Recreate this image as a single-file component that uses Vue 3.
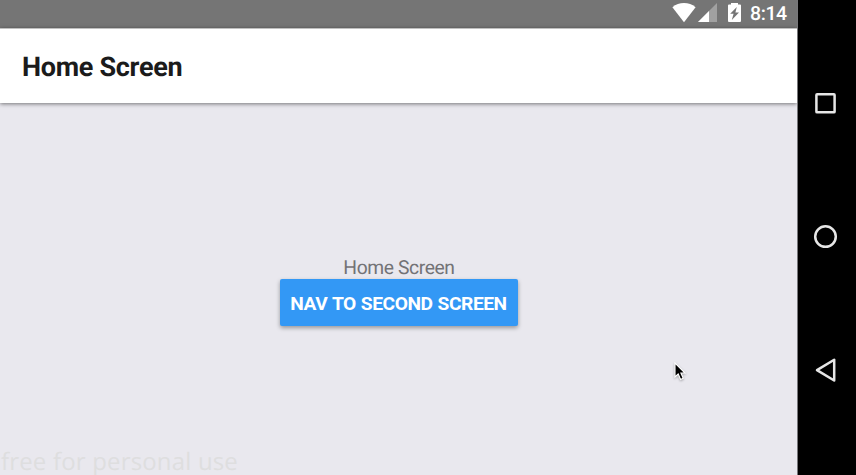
<script setup>
const title = 'Home Screen'
</script>

<template>
  <div class="device">
    <div class="screen">
      <div class="status">
        <svg class="wifi" width="24" height="20" viewBox="0 0 24 20"><path d="M.4 4.2C7-1.4 17-1.4 23.6 4.2L12 19.2Z" fill="#fff" /></svg>
        <svg class="signal" width="19" height="19" viewBox="0 0 19 19"><path d="M0 19 19 0V19Z" fill="#a1a1a1" /><path d="M0 19 11 8V19Z" fill="#fff" /></svg>
        <svg class="battery" width="13" height="19" viewBox="0 0 13 19"><path d="M3 0H10V1.5H12Q13 1.5 13 2.5V18Q13 19 12 19H1Q0 19 0 18V2.5Q0 1.5 1 1.5H3Z" fill="#fff" /><path d="M8.8 4 2.2 10.8H5.6L3.8 17 11 9.4H7.4Z" fill="#757575" /></svg>
        <span class="time">8:14</span>
      </div>
      <header class="header"><h1>{{ title }}</h1></header>
      <main class="content">
        <p class="label">{{ title }}</p>
        <button class="button">NAV TO SECOND SCREEN</button>
      </main>
      <div class="watermark">free for personal use</div>
      <svg class="cursor" width="13" height="20" viewBox="0 0 13 20"><path d="M1 1V15L4.2 12 6.6 17.4 9.2 16.2 6.9 11H11Z" fill="#000" stroke="#fff" stroke-width="1.1" /></svg>
    </div>
    <nav class="nav">
      <svg width="28" height="28" viewBox="0 0 28 28"><rect x="4.4" y="4.2" width="18.2" height="18" rx=".7" /></svg>
      <svg width="28" height="28" viewBox="0 0 28 28"><circle cx="13.5" cy="13.4" r="10.3" /></svg>
      <svg width="28" height="28" viewBox="0 0 28 28"><path d="M5 13 22.2 2.6V23.4Z" /></svg>
    </nav>
  </div>
</template>

<style>
body { margin: 0; overflow: hidden; }
</style>

<style scoped>
.device {
  display: flex;
  width: 856px;
  height: 475px;
  background: #000;
  font-family: Roboto, "Liberation Sans", sans-serif;
  text-rendering: geometricPrecision;
}
.screen {
  position: relative;
  display: flex;
  flex: none;
  flex-direction: column;
  box-sizing: border-box;
  width: 798px;
  overflow: hidden;
  border-right: 1px solid #77777a;
  background: #e9e8ee;
}
.status {
  display: flex;
  flex: none;
  box-sizing: border-box;
  justify-content: flex-end;
  height: 28px;
  padding: 3px 10px 0 0;
  background: #757575;
}
.wifi { margin: 0 2px 0 0; }
.signal { margin-right: 11px; }
.battery { margin-right: 9px; }
.time {
  width: 37px;
  color: #fff;
  font-size: 19.5px;
  font-weight: 500;
  letter-spacing: -.4px;
  line-height: 21px;
  white-space: nowrap;
}
.header {
  display: flex;
  flex: none;
  box-sizing: border-box;
  align-items: center;
  height: 75px;
  padding: 2px 22px 0;
  border-top: 1px solid #c0c0c0;
  background: #fff;
  box-shadow: 0 1px 4px rgba(0, 0, 0, .5);
}
h1 {
  margin: 0;
  color: #1b1b1b;
  font-size: 27px;
  font-weight: 700;
  letter-spacing: -.3px;
  line-height: 32px;
}
.content {
  display: flex;
  flex: 1;
  flex-direction: column;
  align-items: center;
  justify-content: center;
}
.label {
  margin: 4px 0 0 1px;
  color: #737376;
  font-size: 19.3px;
  letter-spacing: -.4px;
  line-height: 22px;
}
.button {
  width: 238px;
  height: 47px;
  padding: 2px 0 0;
  border: 0;
  border-radius: 2px;
  background: #3398f5;
  color: #fff;
  font-family: inherit;
  font-size: 19.2px;
  font-weight: 700;
  letter-spacing: -.45px;
  word-spacing: .7px;
  white-space: nowrap;
  box-shadow: 0 2px 4px rgba(0, 0, 0, .35);
}
.watermark {
  position: absolute;
  bottom: -1px;
  left: 1px;
  color: #dededf;
  font-family: "Open Sans", sans-serif;
  font-size: 24px;
  letter-spacing: .17px;
  line-height: 28px;
  white-space: nowrap;
}
.cursor {
  position: absolute;
  top: 362px;
  left: 674px;
  filter: drop-shadow(0 1px 1px rgba(0, 0, 0, .3));
}
.nav {
  display: flex;
  flex-direction: column;
  gap: 105px;
  padding: 90px 0 0 14px;
}
.nav svg {
  flex: none;
  height: 28.3px;
  fill: none;
  stroke: #e6e6e6;
  stroke-width: 2.5;
  stroke-linejoin: round;
}
</style>
